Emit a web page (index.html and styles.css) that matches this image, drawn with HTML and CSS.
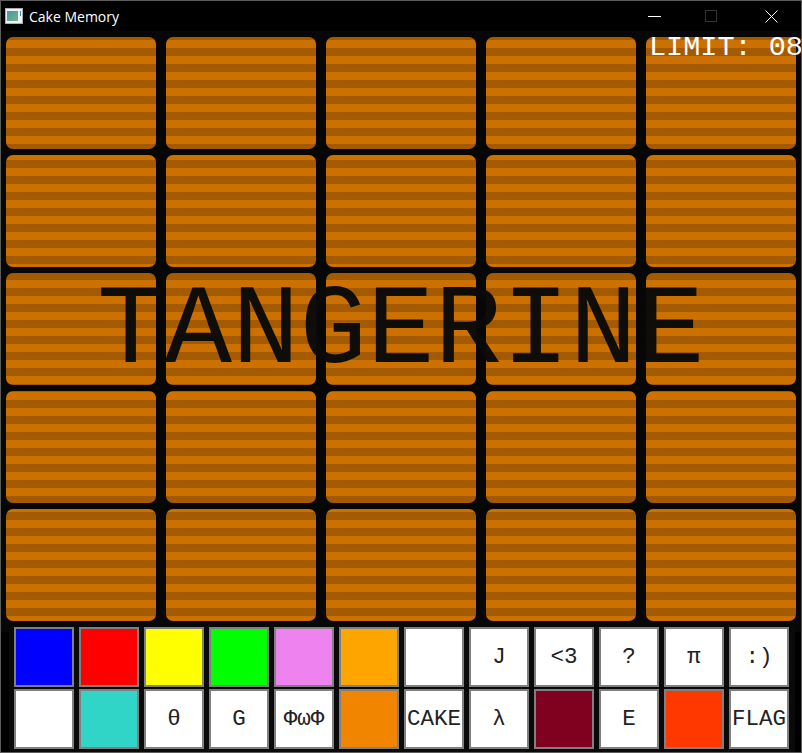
FILE: index.html
```html
<!DOCTYPE html>
<html lang="en">
<head>
  <meta charset="UTF-8">
  <title>Cake Memory</title>
  <link rel="stylesheet" href="styles.css">
</head>
<body>
  <div class="window">
    <header class="titlebar">
      <svg class="app-icon" width="18" height="16" viewBox="0 0 18 16">
        <defs>
          <linearGradient id="screen" x1="0" y1="0" x2="1" y2="1">
            <stop offset="0" stop-color="#3f9aa8"/>
            <stop offset="1" stop-color="#7fae86"/>
          </linearGradient>
        </defs>
        <rect x="0.5" y="0.5" width="17" height="15" fill="#eef2f5" stroke="#a8aeb4"/>
        <rect x="2" y="3" width="11" height="10" fill="url(#screen)"/>
        <rect x="15" y="3" width="1" height="5" fill="#4f8a9a"/>
      </svg>
      <span class="title">Cake Memory</span>
      <div class="controls">
        <svg class="ctl-min" width="14" height="14" viewBox="0 0 14 14"><path d="M1 7.5h13" stroke="#fff"/></svg>
        <svg class="ctl-max" width="12" height="12" viewBox="0 0 12 12"><rect x="0.5" y="0.5" width="11" height="11" fill="none" stroke="#333"/></svg>
        <svg class="ctl-close" width="13" height="13" viewBox="0 0 13 13"><path d="M0.5 0.5l12 12M12.5 0.5l-12 12" stroke="#fff"/></svg>
      </div>
    </header>

    <main class="board">
      <div class="card"></div><div class="card"></div><div class="card"></div><div class="card"></div><div class="card"></div>
      <div class="card"></div><div class="card"></div><div class="card"></div><div class="card"></div><div class="card"></div>
      <div class="card"></div><div class="card"></div><div class="card"></div><div class="card"></div><div class="card"></div>
      <div class="card"></div><div class="card"></div><div class="card"></div><div class="card"></div><div class="card"></div>
      <div class="card"></div><div class="card"></div><div class="card"></div><div class="card"></div><div class="card"></div>
    </main>

    <section class="palette">
      <div class="key blue"></div>
      <div class="key red"></div>
      <div class="key yellow"></div>
      <div class="key lime"></div>
      <div class="key violet"></div>
      <div class="key orange"></div>
      <div class="key"></div>
      <div class="key">J</div>
      <div class="key">&lt;3</div>
      <div class="key">?</div>
      <div class="key">π</div>
      <div class="key">:)</div>

      <div class="key"></div>
      <div class="key turquoise"></div>
      <div class="key">θ</div>
      <div class="key">G</div>
      <div class="key">ΦωΦ</div>
      <div class="key tangerine"></div>
      <div class="key">CAKE</div>
      <div class="key">λ</div>
      <div class="key burgundy"></div>
      <div class="key">E</div>
      <div class="key scarlet"></div>
      <div class="key">FLAG</div>
    </section>

    <div class="word">TANGERINE</div>
    <div class="limit">LIMIT: 08</div>
  </div>
</body>
</html>
```

FILE: styles.css
```css
/* General Styles */
html, body {
  margin: 0;
  padding: 0;
  background-color: #000;
}

.window {
  position: relative;
  box-sizing: border-box;
  width: 802px;
  height: 753px;
  border: 1px solid #5c5c5c;
  background-color: #000;
  overflow: hidden;
  font-family: "Liberation Mono", monospace;
}

/* Title bar */
.titlebar {
  display: flex;
  align-items: center;
  height: 30px;
  padding-left: 4px;
  background-color: #000;
  color: #fff;
}

.app-icon {
  flex: none;
}

.title {
  margin-left: 6px;
  font-family: "Open Sans", sans-serif;
  font-size: 14px;
}

.controls {
  display: flex;
  align-items: center;
  margin-left: auto;
  padding-right: 23px;
}

.ctl-max {
  margin-left: 44px;
}

.ctl-close {
  margin-left: 48px;
}

/* Card grid */
.board {
  display: grid;
  grid-template-columns: repeat(5, 150px);
  grid-auto-rows: 112px;
  column-gap: 10px;
  row-gap: 6px;
  padding: 6px 5px 11px;
  background-color: #070707;
}

.card {
  border-radius: 7px;
  /* the stripes run on through all cards, so they are tied to the page */
  background-image: repeating-linear-gradient(#a35a00 0, #a35a00 8px, #cc7000 8px, #cc7000 16px);
  background-attachment: fixed;
}

/* Answer buttons */
.palette {
  display: grid;
  grid-template-columns: repeat(12, 60px);
  grid-auto-rows: 60px;
  column-gap: 5px;
  row-gap: 2px;
  margin: -5px 6px 0 8px;
  padding: 0 5px 3px;
  background-color: #0a0a0a;
}

.key {
  display: flex;
  align-items: center;
  justify-content: center;
  box-sizing: border-box;
  border: 2px solid #808080;
  background-color: #fff;
  color: #222;
  font-size: 22.5px;
  white-space: nowrap;
}

.blue { background-color: #0000ff; }
.red { background-color: #ff0000; }
.yellow { background-color: #ffff00; }
.lime { background-color: #00ff00; }
.violet { background-color: #ee82ee; }
.orange { background-color: #ffa500; }
.turquoise { background-color: #30d5c8; }
.tangerine { background-color: #f28500; }
.burgundy { background-color: #800020; }
.scarlet { background-color: #ff3800; }

/* Text drawn over the board */
.word {
  position: absolute;
  top: 268px;
  left: 96px;
  color: rgba(10, 10, 10, 0.97);
  font-size: 112.5px;
  line-height: 127px;
  white-space: nowrap;
}

.limit {
  position: absolute;
  top: 31px;
  left: 648px;
  color: #fff;
  font-size: 28.5px;
  line-height: 32px;
  white-space: nowrap;
}
```
